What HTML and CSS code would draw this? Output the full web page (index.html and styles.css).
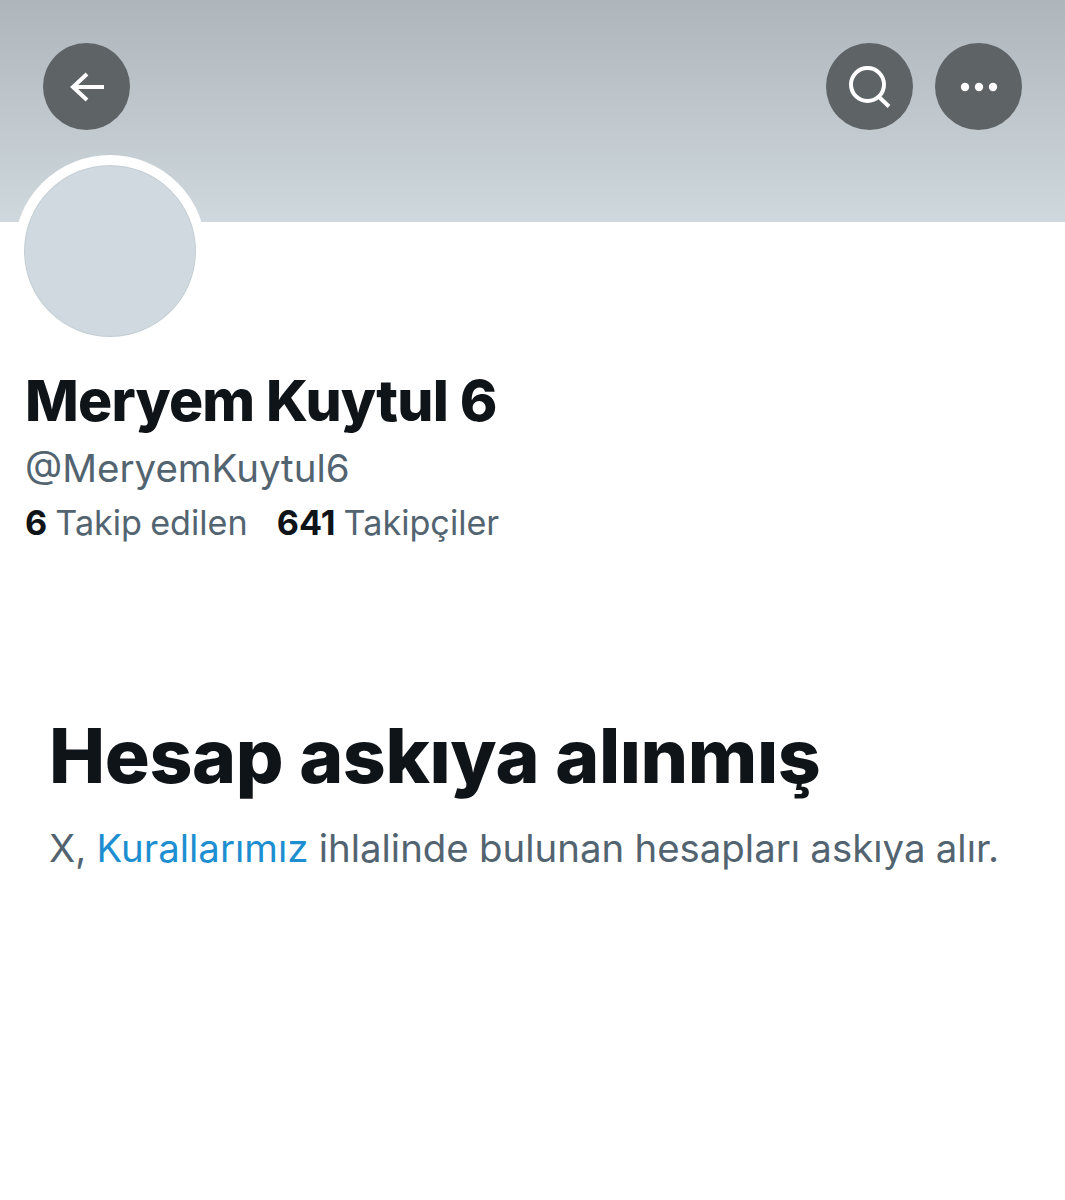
FILE: index.html
```html
<!DOCTYPE html>
<html lang="tr">
<head>
<meta charset="utf-8">
<title>Meryem Kuytul 6</title>
<link rel="stylesheet" href="styles.css">
</head>
<body>
<header class="banner">
  <button class="round" aria-label="Geri">
    <svg width="38" height="32" viewBox="0 0 38 32" fill="none" stroke="#fff" stroke-width="4"><path d="M36 16H5M19 3 5 16l14 13"/></svg>
  </button>
  <div class="actions">
    <button class="round" aria-label="Ara">
      <svg width="44" height="44" viewBox="0 0 44 44" fill="none" stroke="#fff" stroke-width="4"><circle cx="19.5" cy="19.5" r="16.5"/><path d="m30 31 11 10.5"/></svg>
    </button>
    <button class="round" aria-label="Daha fazla">
      <svg width="38" height="10" viewBox="0 0 38 10" fill="#fff"><circle cx="5" cy="5" r="4.2"/><circle cx="19" cy="5" r="4.2"/><circle cx="33" cy="5" r="4.2"/></svg>
    </button>
  </div>
</header>
<main>
  <section class="profile">
    <div class="avatar"></div>
    <h1 class="name">Meryem Kuytul 6</h1>
    <p class="handle">@MeryemKuytul6</p>
    <p class="stats"><span class="stat"><b>6</b> Takip edilen</span><span class="stat"><b>641</b> Takipçiler</span></p>
  </section>
  <section class="notice">
    <h2 class="notice-title">Hesap askıya alınmış</h2>
    <p class="notice-text">X, <a href="#">Kurallarımız</a> ihlalinde bulunan hesapları askıya alır.</p>
  </section>
</main>
</body>
</html>
```
FILE: styles.css
```css
* { box-sizing: border-box; }
html, body { margin: 0; background: #fff; }
body { width: 1065px; height: 1200px; overflow: hidden; font-family: Inter, "Noto Sans", sans-serif; color: #0f1419; }
.banner { height: 222px; padding: 43px 43px 0; display: flex; justify-content: space-between; align-items: flex-start; background: linear-gradient(#aeb6bc, #cfd8dd); }
.actions { display: flex; gap: 22px; }
.round { width: 87px; height: 87px; padding: 0; border: 0; border-radius: 50%; background: #5e6366; display: flex; align-items: center; justify-content: center; }
.profile { padding: 0 25px; }
.avatar { width: 192px; height: 192px; margin: -67px 0 0 -11px; border: 10px solid #fff; border-radius: 50%; background: #cfd9df; box-shadow: inset 0 0 0 1px #c4ced3; position: relative; }
.name { margin: 23px 0 0; font-size: 57px; line-height: 62px; font-weight: 800; letter-spacing: -0.8px; }
.handle { margin: 14px 0 0; font-size: 38.5px; line-height: 44px; color: #536471; }
.stats { margin: 14px 0 0; display: flex; gap: 29px; font-size: 34.2px; line-height: 38px; word-spacing: -1.5px; color: #536471; }
.stats b { color: #0f1419; font-weight: 700; }
.notice { padding: 0 49px; margin-top: 172px; }
.notice-title { margin: 0; font-size: 75px; line-height: 84px; font-weight: 800; letter-spacing: -0.4px; }
.notice-text { margin: 27px 0 0; font-size: 38.4px; line-height: 46px; word-spacing: -0.5px; color: #536471; }
.notice-text a { color: #1d8fd0; text-decoration: none; }
```
